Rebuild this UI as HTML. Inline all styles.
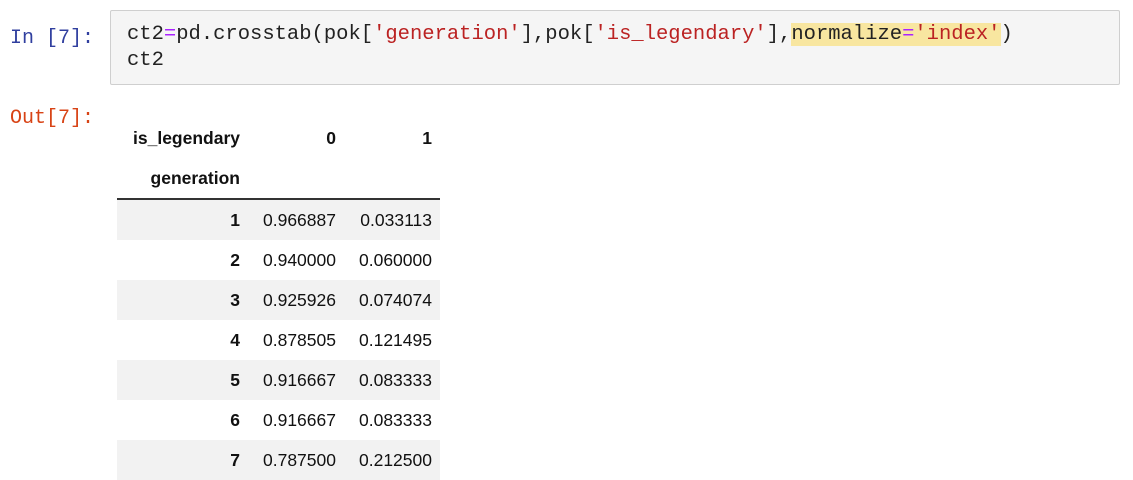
<!DOCTYPE html>
<html><head><style>
body{margin:0;width:1133px;height:479px;background:#fff;position:relative;overflow:hidden;font-family:"Liberation Sans",sans-serif}
.p{position:absolute;font-family:"Liberation Mono",monospace;font-size:20px}
.box{position:absolute;left:110px;top:10px;width:1008px;height:73px;background:#f5f5f5;border:1px solid #cfcfcf;border-radius:2px}
.code{position:absolute;left:16px;top:11px;font-family:"Liberation Mono",monospace;font-size:20.5px;line-height:26px;color:#222;white-space:pre}
.s{color:#b22}.o{color:#a2f}.hl{background:#f8e6a0}
table{position:absolute;left:117px;top:118px;border-collapse:collapse;font-size:17.5px;color:#111;table-layout:fixed;width:323px}
td,th{text-align:right;padding:0 8px 0 0;height:40px}
th{font-weight:bold}
thead tr:last-child th{border-bottom:2px solid #333}
tbody tr:nth-child(odd){background:#f2f2f2}
</style></head><body>
<div class="p" style="left:10px;top:27px;color:#303f9f">In [7]:</div>
<div class="box"><div class="code">ct2<span class="o">=</span>pd.crosstab(pok[<span class="s">'generation'</span>],pok[<span class="s">'is_legendary'</span>],<span class="hl">normalize<span class="o">=</span><span class="s">'index'</span></span>)
ct2</div></div>
<div class="p" style="left:10px;top:107px;color:#d84315">Out[7]:</div>
<table>
<colgroup><col style="width:131px"><col style="width:96px"><col style="width:96px"></colgroup>
<thead><tr><th>is_legendary</th><th>0</th><th>1</th></tr>
<tr><th>generation</th><th></th><th></th></tr></thead>
<tbody>
<tr><th>1</th><td>0.966887</td><td>0.033113</td></tr>
<tr><th>2</th><td>0.940000</td><td>0.060000</td></tr>
<tr><th>3</th><td>0.925926</td><td>0.074074</td></tr>
<tr><th>4</th><td>0.878505</td><td>0.121495</td></tr>
<tr><th>5</th><td>0.916667</td><td>0.083333</td></tr>
<tr><th>6</th><td>0.916667</td><td>0.083333</td></tr>
<tr><th>7</th><td>0.787500</td><td>0.212500</td></tr>
</tbody></table>
</body></html>
